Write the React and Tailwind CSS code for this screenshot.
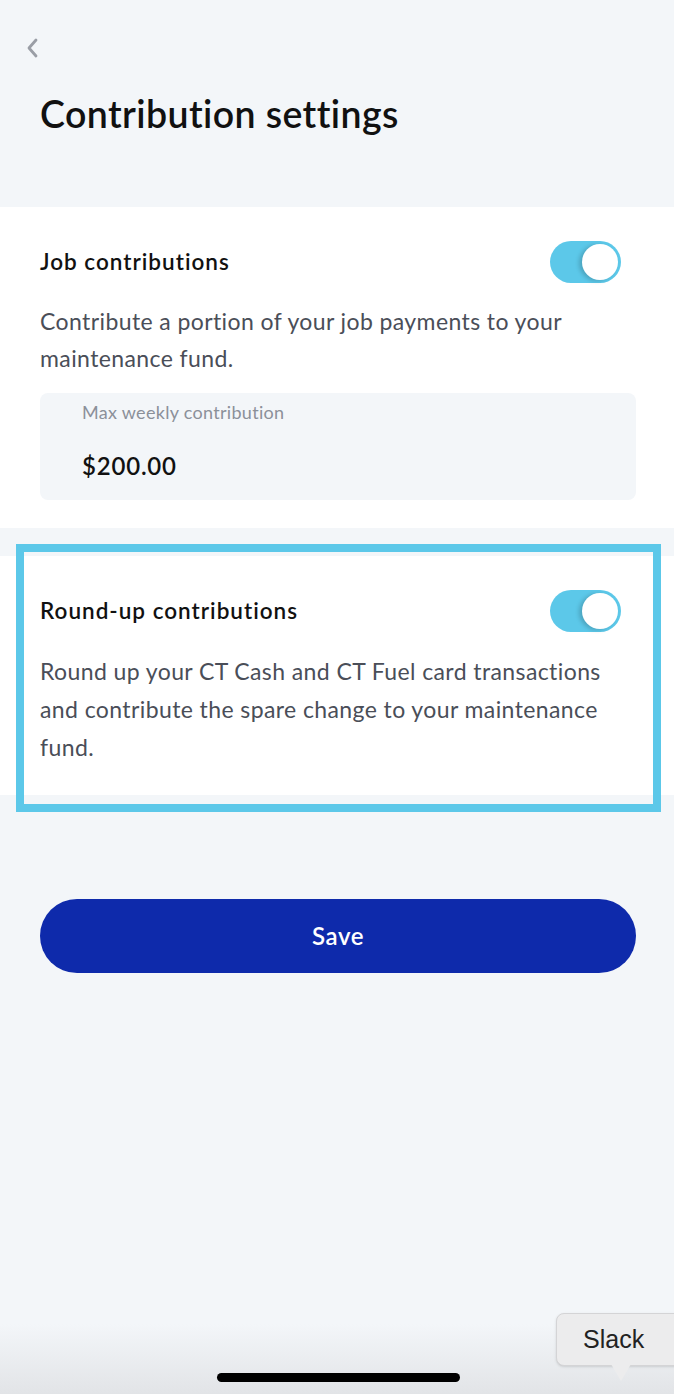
import React, { useState } from 'react';

const Toggle = ({ on, onChange }) => (
  <button
    onClick={() => onChange(!on)}
    className={`relative w-[71px] h-[42px] rounded-full shrink-0 transition-colors ${on ? 'bg-[#5cc8e9]' : 'bg-gray-300'}`}
  >
    <span
      className={`absolute top-[3px] w-[36px] h-[36px] rounded-full bg-white shadow-[-3px_1px_4px_rgba(0,0,0,0.18)] transition-all ${on ? 'left-[32px]' : 'left-[3px]'}`}
    />
  </button>
);

const Section = ({ title, on, onChange, children }) => (
  <div className="bg-white pl-10 pr-[38px] pt-[34px]">
    <div className="flex items-center justify-between pr-[15px]">
      <h2 className="text-[22.5px] font-semibold text-[#111] tracking-[1px]">{title}</h2>
      <Toggle on={on} onChange={onChange} />
    </div>
    {children}
  </div>
);

export default function App() {
  const [jobOn, setJobOn] = useState(true);
  const [roundOn, setRoundOn] = useState(true);

  return (
    <div className="relative w-[674px] h-[1394px] overflow-hidden bg-[#f3f6f9] font-['Lato','Liberation_Sans',sans-serif]">
      {/* Header */}
      <div className="px-10 pt-[36px] h-[207px]">
        <button className="-ml-[15px] text-[#9a9ea6] block">
          <svg width="18" height="24" viewBox="0 0 18 24" fill="none">
            <path d="M11 4 L4 12 L11 20" stroke="currentColor" strokeWidth="2.8" strokeLinecap="round" strokeLinejoin="round" />
          </svg>
        </button>
        <h1 className="mt-[30px] text-[37.5px] leading-[48px] font-semibold text-[#111] tracking-[0.4px]">Contribution settings</h1>
      </div>

      {/* Job contributions */}
      <Section title="Job contributions" on={jobOn} onChange={setJobOn}>
        <p className="mt-[20px] text-[23px] leading-[37px] tracking-[0.4px] text-[#4a4e58]">
          Contribute a portion of your job payments to your maintenance fund.
        </p>
        <div className="mt-[16px] rounded-lg bg-[#f3f6f9] h-[107px] px-[42px] pt-[6px]">
          <div className="text-[18px] tracking-[0.3px] text-[#8b9099]">Max weekly contribution</div>
          <div className="mt-[22px] text-[24px] font-semibold tracking-[0.8px] text-[#111]">$200.00</div>
        </div>
        <div className="h-[28px]" />
      </Section>

      <div className="h-[28px]" />

      {/* Round-up contributions */}
      <div className="relative">
        <Section title="Round-up contributions" on={roundOn} onChange={setRoundOn}>
          <p className="mt-[20px] text-[23px] leading-[38px] tracking-[0.4px] text-[#4a4e58]">
            Round up your CT Cash and CT Fuel card transactions and contribute the spare change to your maintenance fund.
          </p>
          <div className="h-[29px]" />
        </Section>
        <div className="absolute left-[16px] right-[13px] -top-[12px] -bottom-[17px] border-[8px] border-[#5cc8e9] pointer-events-none" />
      </div>

      {/* Save */}
      <div className="pl-10 pr-[38px] mt-[104px]">
        <button className="w-full h-[74px] rounded-full bg-[#0e2aab] text-white text-[24px] font-semibold tracking-[0.6px]">
          Save
        </button>
      </div>

      {/* Bottom shade */}
      <div className="absolute left-0 right-0 bottom-0 h-[70px] bg-gradient-to-b from-transparent to-[#e2e4e7]" />

      {/* Home indicator */}
      <div className="absolute left-[217px] bottom-[12px] w-[243px] h-[9px] rounded-full bg-black" />

      {/* Slack tooltip */}
      <div className="absolute left-[556px] top-[1313px]">
        <div className="w-[130px] h-[53px] rounded-lg bg-[#ececed] border border-[#d4d4d6] shadow-sm pl-[26px] flex items-center text-[25px] text-[#222] font-['Liberation_Sans',sans-serif]">
          Slack
        </div>
        <div className="absolute left-[55px] top-[51px] w-0 h-0 border-l-[10px] border-r-[10px] border-t-[17px] border-l-transparent border-r-transparent border-t-[#ececed]" />
      </div>
    </div>
  );
}
